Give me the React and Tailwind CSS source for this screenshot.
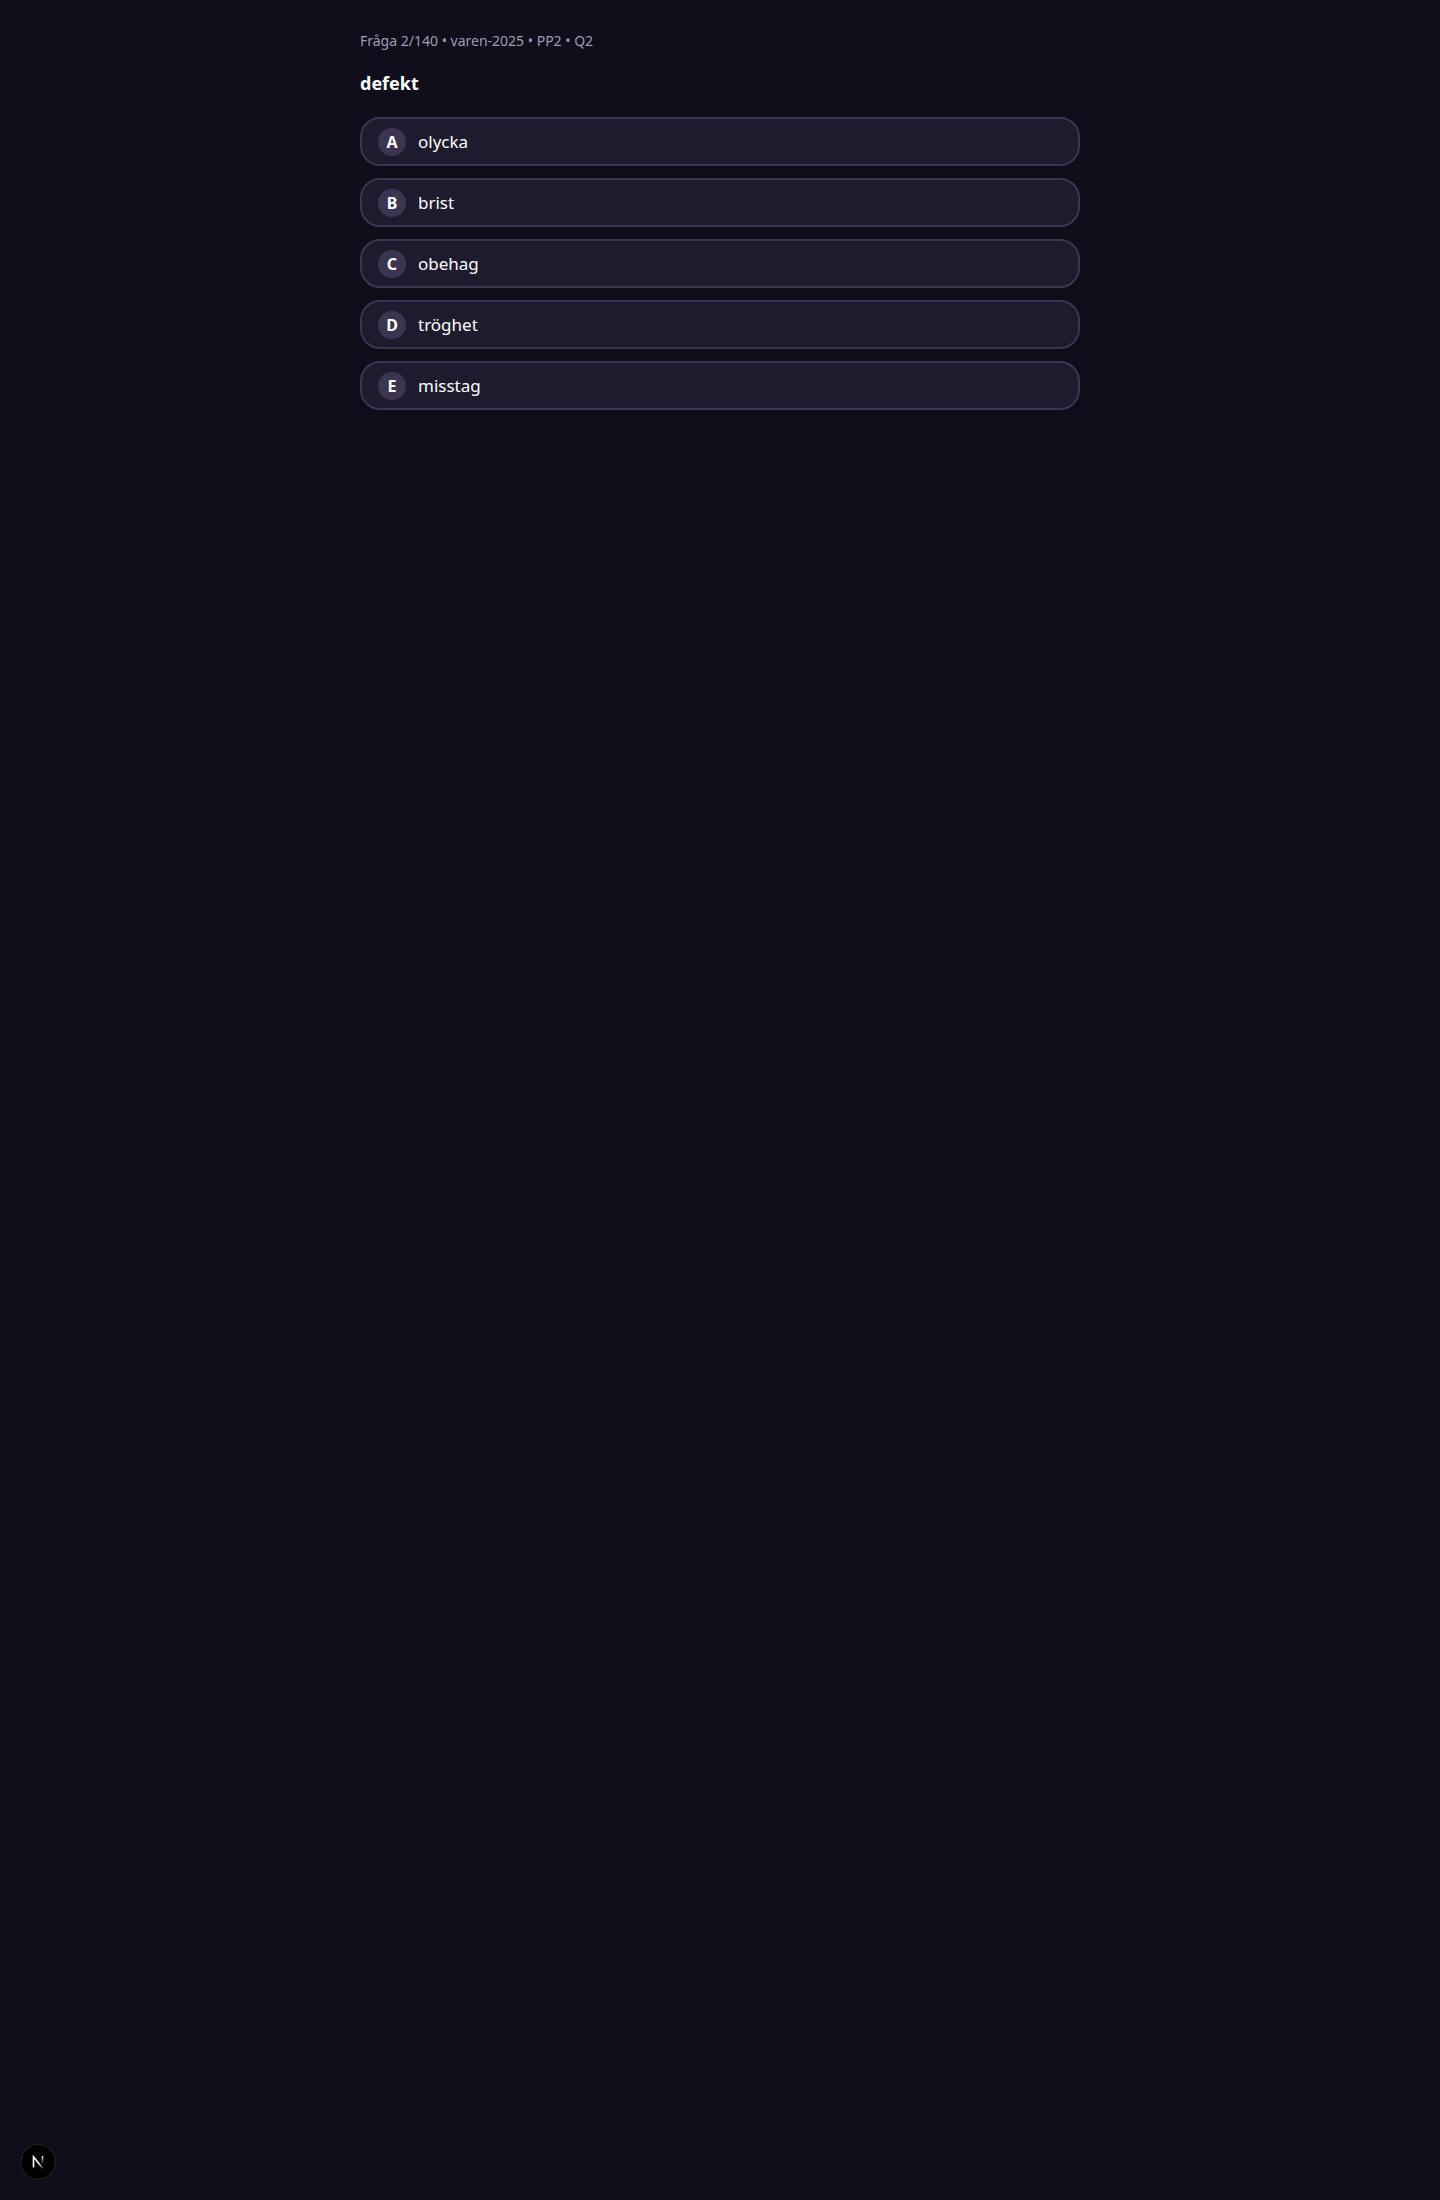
const question = {
  number: 2,
  total: 140,
  exam: 'varen-2025',
  section: 'PP2',
  label: 'Q2',
  prompt: 'defekt',
  options: [
    { key: 'A', text: 'olycka' },
    { key: 'B', text: 'brist' },
    { key: 'C', text: 'obehag' },
    { key: 'D', text: 'tröghet' },
    { key: 'E', text: 'misstag' },
  ],
}

function AnswerOption({ option }) {
  return (
    <button
      type="button"
      className="flex w-full items-center gap-3 rounded-[20px] border-2 border-[#3b3551] bg-[#1e1b2e] px-4 py-2 text-left"
    >
      <span className="flex size-7 shrink-0 items-center justify-center rounded-full bg-[#3b3551] text-base font-bold">
        {option.key}
      </span>
      <span className="text-[17px] leading-[29px]">{option.text}</span>
    </button>
  )
}

function DevToolsBadge() {
  return (
    <button
      type="button"
      aria-label="Open Next.js Dev Tools"
      className="fixed bottom-5 left-5 flex size-9 items-center justify-center rounded-full border border-[#242424] bg-black"
    >
      <svg width="14" height="14" viewBox="0 0 14 14" fill="none" aria-hidden="true">
        <defs>
          <linearGradient id="stem" x1="11" y1="1" x2="11" y2="9" gradientUnits="userSpaceOnUse">
            <stop stopColor="#fff" />
            <stop offset="1" stopColor="#fff" stopOpacity="0" />
          </linearGradient>
          <linearGradient id="slash" x1="8" y1="8" x2="12" y2="13" gradientUnits="userSpaceOnUse">
            <stop stopColor="#fff" />
            <stop offset="1" stopColor="#fff" stopOpacity="0.2" />
          </linearGradient>
        </defs>
        <path d="M2.5 12.5V1.8L11.8 13.4" stroke="url(#slash)" strokeWidth="1.6" />
        <path d="M11.5 1v8.5" stroke="url(#stem)" strokeWidth="1.6" />
      </svg>
    </button>
  )
}

function App() {
  return (
    <div className="min-h-screen bg-[#0f0d1a] font-['Noto_Sans',sans-serif] text-white">
      <main className="mx-auto max-w-3xl px-6 py-8">
        <p className="text-sm leading-[18px] text-[#a09bb5]">
          Fråga {question.number}/{question.total} • {question.exam} • {question.section} • {question.label}
        </p>
        <h1 className="mt-5 text-lg leading-[27px] font-bold">{question.prompt}</h1>
        <div className="mt-5 flex flex-col gap-3">
          {question.options.map((option) => (
            <AnswerOption key={option.key} option={option} />
          ))}
        </div>
      </main>
      <DevToolsBadge />
    </div>
  )
}

export default App
